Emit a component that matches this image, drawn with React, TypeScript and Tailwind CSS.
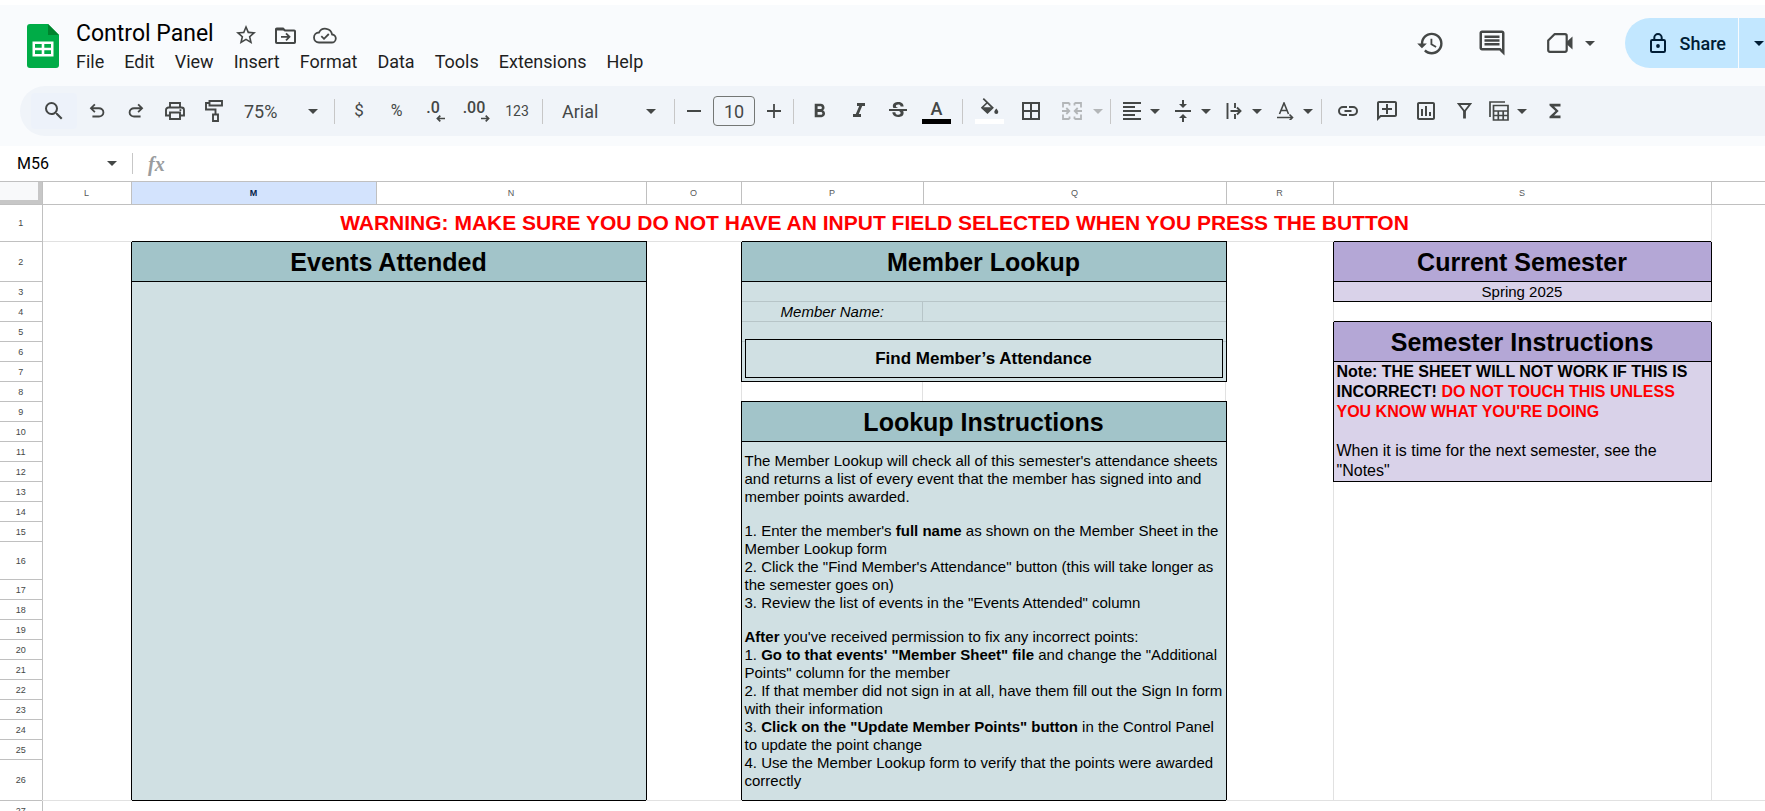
import React from "react";
import {
  MdBorderAll,
  MdFormatAlignLeft,
  MdFormatBold,
  MdFormatItalic,
  MdFunctions,
  MdHistory,
  MdOutlineAddComment,
  MdOutlineComment,
  MdOutlineInsertChart,
  MdSearch,
  MdStarBorder,
  MdStrikethroughS,
  MdVerticalAlignCenter,
} from "react-icons/md";

type SymbolProps = { d: string; className?: string };

/* Glyph on the 960-unit Material Symbols grid. */
function Symbol({ d, className = "size-5" }: SymbolProps) {
  return (
    <svg viewBox="0 -960 960 960" fill="currentColor" className={className} aria-hidden="true">
      <path d={d} />
    </svg>
  );
}

const UNDO =
  "M280-200v-80h284q63 0 109.500-40T720-420q0-60-46.500-100T564-560H312l104 104-56 56-200-200 200-200 56 56-104 104h252q97 0 166.500 63T800-420q0 94-69.500 157T564-200H280Z";
const REDO =
  "M396-200q-97 0-166.500-63T160-420q0-94 69.500-157T396-640h252L544-744l56-56 200 200-200 200-56-56 104-104H396q-63 0-109.500 40T240-420q0 60 46.500 100T396-280h284v80H396Z";

function Caret({ className = "" }: { className?: string }) {
  return (
    <svg viewBox="0 0 10 5" fill="currentColor" className={`w-[10px] h-[5px] shrink-0 ${className}`} aria-hidden="true">
      <path d="M0 0h10L5 5z" />
    </svg>
  );
}

function Divider() {
  return <span className="mx-[6px] h-[25px] w-px shrink-0 bg-[#c7c7c7]" />;
}

function Tool({ label, children, className = "w-[39px]" }: { label: string; children: React.ReactNode; className?: string }) {
  return (
    <button type="button" aria-label={label} className={`flex h-9 shrink-0 items-center justify-center ${className}`}>
      {children}
    </button>
  );
}

function DropTool({ label, children }: { label: string; children: React.ReactNode }) {
  return (
    <button type="button" aria-label={label} className="flex h-9 shrink-0 items-center">
      <span className="flex w-[30px] justify-center">{children}</span>
      <span className="flex w-[15px] justify-center">
        <Caret />
      </span>
    </button>
  );
}

function Logo() {
  return (
    <svg viewBox="0 0 32 44" className="h-[44px] w-8 shrink-0" aria-hidden="true">
      <path d="M3 0h18l11 11v30a3 3 0 0 1-3 3H3a3 3 0 0 1-3-3V3a3 3 0 0 1 3-3z" fill="#00ac47" />
      <path d="M21 0l11 11H21z" fill="#00832d" />
      <path d="M5.500 17.500h21v15h-21z" fill="#fff" />
      <path d="M8 20h6.700v3.700H8zM17.300 20H24v3.700h-6.700zM8 26.300h6.700V30H8zM17.300 26.300H24V30h-6.700z" fill="#00ac47" />
    </svg>
  );
}

function FolderMoveIcon() {
  return (
    <svg viewBox="0 0 21 17" className="h-[17px] w-[21px]" fill="none" stroke="currentColor" strokeWidth="2" aria-hidden="true">
      <path d="M1 3v12.200c0 .5.300.8.800.8h17.400c.5 0 .8-.3.800-.8V4.300c0-.5-.3-.8-.8-.8H10L8 1.500H1.800c-.5 0-.8.300-.8.800z" />
      <path d="M1 1.500h7l2 2H1z" fill="currentColor" stroke="none" />
      <path d="M6 9.800h8M11 6.300l3.500 3.500L11 13.300" strokeWidth="1.800" />
    </svg>
  );
}

function CloudDoneIcon() {
  return (
    <svg viewBox="0 0 24 17" className="h-[17px] w-6" fill="none" stroke="currentColor" strokeWidth="1.800" aria-hidden="true">
      <path d="M6 15.500h12.500a4 4 0 0 0 .6-8A7 7 0 0 0 6 5.500a5 5 0 0 0 0 10z" />
      <path d="M8.300 9.200l2.700 2.600 4.800-4.800" />
    </svg>
  );
}

function PrintIcon() {
  return (
    <svg viewBox="0 0 20 18" className="h-[18px] w-5" fill="none" stroke="currentColor" strokeWidth="1.900" aria-hidden="true">
      <path d="M5 5V1h10v4M5 13.500H1V8a2.500 2.500 0 0 1 2.500-2.500h13A2.500 2.500 0 0 1 19 8v5.500h-4" />
      <path d="M5 10.500h10V17H5z" />
      <path d="M14.500 7.300h1.800v1.800h-1.800z" fill="currentColor" stroke="none" />
    </svg>
  );
}

function PaintIcon() {
  return (
    <svg viewBox="0 0 18 22" className="h-[22px] w-[18px]" fill="none" stroke="currentColor" strokeWidth="1.900" aria-hidden="true">
      <path d="M4.500 1h12.500v4.500H4.500zM4.500 3H1v6.500h9.500V14" />
      <path d="M8 14.500h5V21H8z" />
    </svg>
  );
}

function DecimalIcon({ text, dir }: { text: string; dir: "left" | "right" }) {
  return (
    <span className="flex flex-col items-end text-[16px] leading-[14px] font-medium">
      <span className="pr-[5px]">{text}</span>
      <svg viewBox="0 0 9 7" className="h-[7px] w-[9px]" fill="none" stroke="currentColor" strokeWidth="1.700" aria-hidden="true">
        {dir === "left" ? <path d="M9 3.500H1.500M4.300.600L1.400 3.500l2.900 2.900" /> : <path d="M0 3.500h7.500M4.700.600l2.900 2.900-2.900 2.900" />}
      </svg>
    </span>
  );
}

function FillIcon() {
  return (
    <svg viewBox="0 0 18 17" className="h-[17px] w-[18px]" aria-hidden="true">
      <path d="M2.300.6l9.400 9.200-5.200 5L1 9.700l5.400-5.200" fill="none" stroke="currentColor" strokeWidth="1.700" />
      <path d="M1.200 9.200h10.300l-5 5z" fill="currentColor" />
      <path d="M15.300 10.500c1.200 1.500 2 2.500 2 3.600a2 2 0 0 1-4 0c0-1.100.8-2.100 2-3.600z" fill="currentColor" />
    </svg>
  );
}

function MergeIcon() {
  return (
    <svg viewBox="0 0 20 18" className="h-[18px] w-5" fill="none" stroke="currentColor" strokeWidth="1.800" aria-hidden="true">
      <path d="M7.500 1H1v4.500M1 12.500V17h6.500M12.500 1H19v4.500M19 12.500V17h-6.500" />
      <path d="M0 9h7M4.300 6l3 3-3 3M20 9h-7M15.700 6l-3 3 3 3M7.500 1v2.500M12.500 1v2.500M7.500 17v-2.500M12.500 17v-2.500" />
    </svg>
  );
}

function WrapIcon() {
  return (
    <svg viewBox="0 0 16 16" className="size-4" fill="none" stroke="currentColor" strokeWidth="1.900" aria-hidden="true">
      <path d="M1.500 0v16M4.500 8h9.500M11 4.500L14.500 8 11 11.500M9 0v5M9 11v5" />
    </svg>
  );
}

function RotateIcon() {
  return (
    <svg viewBox="0 0 18 18" className="size-[18px]" fill="none" stroke="currentColor" strokeWidth="1.600" aria-hidden="true">
      <path d="M3.500 12L8 1l4.500 11M5 8.500h6M1 15.500h15M13.500 12.500l3 3-3 3" />
    </svg>
  );
}

function LinkIcon() {
  return (
    <svg viewBox="0 0 20 10" className="h-[10px] w-5" fill="none" stroke="currentColor" strokeWidth="2" aria-hidden="true">
      <path d="M9 1H5a4 4 0 0 0 0 8h4M11 1h4a4 4 0 0 1 0 8h-4M6.500 5h7" />
    </svg>
  );
}

function FilterIcon() {
  return (
    <svg viewBox="0 0 15 16" className="h-4 w-[15px]" fill="none" stroke="currentColor" strokeWidth="1.800" aria-hidden="true">
      <path d="M1.700 1h11.600L7.500 8.500z" />
      <path d="M7.500 8v7.500" strokeWidth="2.800" />
    </svg>
  );
}

function TableViewsIcon() {
  return (
    <svg viewBox="0 0 20 20" className="size-5" fill="none" stroke="currentColor" strokeWidth="1.700" aria-hidden="true">
      <path d="M1 16V1h15" />
      <path d="M4.500 4.500H19V19H4.500zM4.500 10H19M4.500 14.500H19M9.300 10v9M14.200 10v9" />
    </svg>
  );
}

function VideoIcon() {
  return (
    <svg viewBox="0 0 26 20" className="h-5 w-[26px]" aria-hidden="true">
      <path
        d="M7.500 1.200H18c1 0 1.700.7 1.700 1.700v14.200c0 1-.7 1.700-1.700 1.700H2.900c-1 0-1.700-.7-1.700-1.700V7.500z"
        fill="none"
        stroke="currentColor"
        strokeWidth="2.200"
        strokeLinejoin="round"
      />
      <path d="M19.500 9L25.500 3.500v13L19.500 11z" fill="currentColor" />
    </svg>
  );
}

function LockIcon() {
  return (
    <svg viewBox="0 0 16 20" className="h-5 w-4" fill="none" stroke="currentColor" strokeWidth="2" aria-hidden="true">
      <rect x="1" y="7" width="14" height="12" rx="1.200" />
      <path d="M4.300 7V4.700a3.700 3.700 0 0 1 7.400 0V7" />
      <circle cx="8" cy="13" r="1.900" fill="currentColor" stroke="none" />
    </svg>
  );
}

const MENUS = ["File", "Edit", "View", "Insert", "Format", "Data", "Tools", "Extensions", "Help"];

function TitleBar() {
  return (
    <header className="flex items-start justify-between pl-[27px] pt-[13px]">
      <div className="flex">
        <div className="pt-[6px]">
          <Logo />
        </div>
        <div className="pl-[17px]">
          <div className="flex h-8 items-center">
            <h1 className="text-[23px] leading-[30px] text-black">Control Panel</h1>
            <div className="flex items-center gap-[17px] pl-[20px] pt-[2px] text-[#444746]">
              <button type="button" aria-label="Star">
                <MdStarBorder className="size-6" />
              </button>
              <button type="button" aria-label="Move">
                <FolderMoveIcon />
              </button>
              <button type="button" aria-label="Document status">
                <CloudDoneIcon />
              </button>
            </div>
          </div>
          <nav className="flex gap-5 text-[18px] leading-6 text-[#1f1f1f]">
            {MENUS.map((m) => (
              <button key={m} type="button">
                {m}
              </button>
            ))}
          </nav>
        </div>
      </div>
      <div className="-mr-[24px] flex h-[50px] shrink-0 items-center text-[#444746]">
        <button type="button" aria-label="Version history">
          <MdHistory className="size-[29px]" />
        </button>
        <button type="button" aria-label="Comments" className="ml-[32px]">
          <MdOutlineComment className="size-[30px]" />
        </button>
        <button type="button" aria-label="Start a call" className="ml-[40px] flex items-center gap-[12px]">
          <VideoIcon />
          <Caret />
        </button>
        <div className="ml-[30px] flex h-[50px] gap-px text-[#001d35]">
          <button
            type="button"
            className="flex items-center gap-[14px] rounded-l-full bg-[#c2e7ff] pr-[12px] pl-[25px] text-[18px] font-medium"
          >
            <LockIcon />
            Share
          </button>
          <button type="button" aria-label="Share options" className="flex w-[50px] items-center rounded-r-full bg-[#c2e7ff] pl-[15px]">
            <Caret />
          </button>
        </div>
      </div>
    </header>
  );
}

function Toolbar() {
  return (
    <div
      role="toolbar"
      className="mt-3 ml-5 flex h-[50px] items-center overflow-hidden rounded-l-full bg-[#f0f4f9] pl-[11px] text-[18px] text-[#444746]"
    >
      <Tool label="Search the menus" className="w-[46px] rounded-sm bg-[#edf2fa]">
        <MdSearch className="size-6" />
      </Tool>
      <Tool label="Undo">
        <Symbol d={UNDO} className="size-[22px]" />
      </Tool>
      <Tool label="Redo">
        <Symbol d={REDO} className="size-[22px]" />
      </Tool>
      <Tool label="Print">
        <PrintIcon />
      </Tool>
      <Tool label="Paint format">
        <PaintIcon />
      </Tool>
      <button type="button" className="flex h-9 w-[95px] shrink-0 items-center justify-between pr-[10px] pl-[11px]">
        75% <Caret />
      </button>
      <Divider />
      <Tool label="Currency" className="w-[36px]">
        <span className="text-[17px]">$</span>
      </Tool>
      <Tool label="Percent">
        <span className="text-[16px]">%</span>
      </Tool>
      <Tool label="Decrease decimals">
        <DecimalIcon text=".0" dir="left" />
      </Tool>
      <Tool label="Increase decimals" className="w-[43px]">
        <DecimalIcon text=".00" dir="right" />
      </Tool>
      <Tool label="More formats" className="w-[38px]">
        <span className="text-[14px]">123</span>
      </Tool>
      <Divider />
      <button type="button" className="flex h-9 w-[119px] shrink-0 items-center justify-between pr-[12px] pl-[13px]">
        Arial <Caret />
      </button>
      <Divider />
      <Tool label="Decrease font size" className="w-[26px]">
        <svg viewBox="0 0 14 14" className="size-[14px]" stroke="currentColor" strokeWidth="1.800" aria-hidden="true">
          <path d="M0 7h14" />
        </svg>
      </Tool>
      <input
        aria-label="Font size"
        defaultValue="10"
        className="mx-[6px] h-[30px] w-[42px] shrink-0 rounded-[4px] border border-[#747775] bg-transparent text-center text-[18px]"
      />
      <Tool label="Increase font size" className="w-[26px]">
        <svg viewBox="0 0 14 14" className="size-[14px]" stroke="currentColor" strokeWidth="1.800" aria-hidden="true">
          <path d="M0 7h14M7 0v14" />
        </svg>
      </Tool>
      <Divider />
      <Tool label="Bold">
        <MdFormatBold className="size-[23px]" />
      </Tool>
      <Tool label="Italic">
        <MdFormatItalic className="size-6" />
      </Tool>
      <Tool label="Strikethrough">
        <MdStrikethroughS className="size-6" />
      </Tool>
      <Tool label="Text color">
        <span className="flex flex-col items-center text-[18px] leading-[19px] font-medium">
          A
          <span className="mt-[1px] h-[5px] w-[29px] bg-black" />
        </span>
      </Tool>
      <Divider />
      <Tool label="Fill color" className="w-[41px]">
        <span className="flex flex-col items-center">
          <FillIcon />
          <span className="mt-[4px] h-[5px] w-[29px] bg-white" />
        </span>
      </Tool>
      <Tool label="Borders" className="w-[41px]">
        <MdBorderAll className="size-6" />
      </Tool>
      <Tool label="Merge cells" className="w-[41px] text-[#b3b6b8]">
        <MergeIcon />
      </Tool>
      <Tool label="Merge options" className="w-3 text-[#b3b6b8]">
        <Caret />
      </Tool>
      <Divider />
      <div className="flex gap-[6px]">
        <DropTool label="Horizontal align">
          <MdFormatAlignLeft className="size-6" />
        </DropTool>
        <DropTool label="Vertical align">
          <MdVerticalAlignCenter className="size-6" />
        </DropTool>
        <DropTool label="Text wrapping">
          <WrapIcon />
        </DropTool>
        <DropTool label="Text rotation">
          <RotateIcon />
        </DropTool>
      </div>
      <Divider />
      <Tool label="Insert link">
        <LinkIcon />
      </Tool>
      <Tool label="Insert comment">
        <MdOutlineAddComment className="size-6 -scale-x-100" />
      </Tool>
      <Tool label="Insert chart">
        <MdOutlineInsertChart className="size-6" />
      </Tool>
      <Tool label="Create a filter">
        <FilterIcon />
      </Tool>
      <div className="flex gap-[6px]">
        <DropTool label="Filter views">
          <TableViewsIcon />
        </DropTool>
        <Tool label="Functions">
          <MdFunctions className="size-[22px]" />
        </Tool>
      </div>
    </div>
  );
}

function FormulaBar() {
  return (
    <div className="flex h-[35px] items-center bg-white">
      <input aria-label="Name box" defaultValue="M56" className="w-[90px] bg-transparent pl-[17px] text-[16px] text-black" />
      <Caret className="ml-[17px] text-[#444746]" />
      <span className="ml-[15px] h-[21px] w-px bg-[#c7c7c7]" />
      <label htmlFor="formula" className="pl-[15px] font-['Liberation_Serif',serif] text-[20px] leading-none font-bold text-[#9a9c9e] italic">
        fx
      </label>
      <input id="formula" className="min-w-0 flex-1 bg-transparent pl-4 text-[16px]" />
    </div>
  );
}

const COLUMNS = ["L", "M", "N", "O", "P", "Q", "R", "S", ""];

const BOX = "border border-black";
const TEAL_HEAD = "border border-black bg-[#a2c4c9] text-[25px] leading-7 font-bold";
const PURPLE_HEAD = "border border-black bg-[#b4a7d6] text-[25px] leading-7 font-bold";

function rowHeight(n: number): string {
  switch (n) {
    case 1:
      return "h-[37px]";
    case 2:
      return "h-[40px]";
    case 16:
      return "h-[38px]";
    case 26:
      return "h-[41px]";
    default:
      return "h-[20px]";
  }
}

function LookupText() {
  return (
    <div className="text-left text-[15px] leading-[18px]">
      <p>
        The Member Lookup will check all of this semester's attendance sheets and returns a list of every event that the
        member has signed into and member points awarded.
      </p>
      <p className="mt-4">
        1. Enter the member's <b>full name</b> as shown on the Member Sheet in the Member Lookup form
      </p>
      <p>2. Click the "Find Member's Attendance" button (this will take longer as the semester goes on)</p>
      <p>3. Review the list of events in the "Events Attended" column</p>
      <p className="mt-4">
        <b>After</b> you've received permission to fix any incorrect points:
      </p>
      <p>
        1. <b>Go to that events' "Member Sheet" file</b> and change the "Additional Points" column for the member
      </p>
      <p>2. If that member did not sign in at all, have them fill out the Sign In form with their information</p>
      <p>
        3. <b>Click on the "Update Member Points" button</b> in the Control Panel to update the point change
      </p>
      <p>4. Use the Member Lookup form to verify that the points were awarded correctly</p>
    </div>
  );
}

/* Cells that begin in the given row; merged areas span down from here.
   Grid lines inside a black box are inset shadows, so they never cut its border. */
function rowCells(n: number): React.ReactNode {
  switch (n) {
    case 1:
      return (
        <>
          <td colSpan={8} className="border-r border-[#e1e1e1] pr-1 text-[21px] leading-6 font-bold text-[#ff0000]">
            WARNING: MAKE SURE YOU DO NOT HAVE AN INPUT FIELD SELECTED WHEN YOU PRESS THE BUTTON
          </td>
          <td rowSpan={26} className="border-b border-[#e1e1e1]" />
        </>
      );
    case 2:
      return (
        <>
          <td rowSpan={25} className="border-y border-[#e1e1e1]" />
          <td colSpan={2} className={TEAL_HEAD}>
            Events Attended
          </td>
          <td rowSpan={25} className="border-y border-[#e1e1e1]" />
          <td colSpan={2} className={TEAL_HEAD}>
            Member Lookup
          </td>
          <td rowSpan={25} className="border-y border-[#e1e1e1]" />
          <td className={PURPLE_HEAD}>Current Semester</td>
        </>
      );
    case 3:
      return (
        <>
          <td colSpan={2} rowSpan={24} className={`${BOX} bg-[#d0e0e3]`} />
          <td colSpan={2} className="border-x border-black bg-[#d0e0e3] shadow-[inset_0_-1px_0_#b7c5c8]" />
          <td className={`${BOX} bg-[#d9d2e9] text-[15px] leading-[18px]`}>Spring 2025</td>
        </>
      );
    case 4:
      return (
        <>
          <td className="border-l border-black bg-[#d0e0e3] text-[15px] leading-[18px] italic shadow-[inset_-1px_-1px_0_#b7c5c8]">
            <label htmlFor="member">Member Name:</label>
          </td>
          <td className="border-r border-black bg-[#d0e0e3] p-0 shadow-[inset_0_-1px_0_#b7c5c8]">
            <input id="member" className="block h-[18px] w-full bg-transparent px-1 text-[15px]" />
          </td>
          <td className="border-x border-[#e1e1e1]" />
        </>
      );
    case 5:
      return (
        <>
          <td colSpan={2} className="border-x border-black bg-[#d0e0e3] shadow-[inset_0_-1px_0_#b7c5c8]" />
          <td rowSpan={2} className={PURPLE_HEAD}>
            Semester Instructions
          </td>
        </>
      );
    case 6:
      return (
        <td colSpan={2} rowSpan={2} className="relative border-x border-b border-black bg-[#d0e0e3]">
          <button
            type="button"
            className="absolute inset-x-[3px] -top-[3px] bottom-[3px] border border-black bg-[#d0e0e3] text-[17px] font-bold"
          >
            Find Member’s Attendance
          </button>
        </td>
      );
    case 7:
      return (
        <td rowSpan={6} className={`${BOX} bg-[#d9d2e9] px-[3px] text-left text-[16px] leading-5`}>
          <p className="font-bold">
            Note: THE SHEET WILL NOT WORK IF THIS IS INCORRECT!{" "}
            <span className="text-[#ff0000]">DO NOT TOUCH THIS UNLESS YOU KNOW WHAT YOU'RE DOING</span>
          </p>
          <p className="mt-[19px]">When it is time for the next semester, see the "Notes"</p>
        </td>
      );
    case 8:
      return (
        <>
          <td className="shadow-[inset_1px_0_0_#e1e1e1,inset_-1px_0_0_#e1e1e1]" />
          <td className="shadow-[inset_-1px_0_0_#e1e1e1]" />
        </>
      );
    case 9:
      return (
        <td colSpan={2} rowSpan={2} className={TEAL_HEAD}>
          Lookup Instructions
        </td>
      );
    case 11:
      return (
        <td colSpan={2} rowSpan={16} className={`${BOX} bg-[#d0e0e3] px-[3px]`}>
          <LookupText />
        </td>
      );
    case 13:
      return <td rowSpan={14} className="border-x border-b border-[#e1e1e1]" />;
    case 27:
      return <td colSpan={9} />;
    default:
      return null;
  }
}

function Sheet() {
  const rows = Array.from({ length: 27 }, (_, i) => i + 1);
  return (
    <table className="w-full table-fixed border-collapse bg-white text-center font-['Liberation_Sans',Arial,sans-serif] text-black [&_td]:py-0">
      <colgroup>
        <col className="w-[42px]" />
        <col className="w-[89px]" />
        <col className="w-[245px]" />
        <col className="w-[270px]" />
        <col className="w-[95px]" />
        <col className="w-[182px]" />
        <col className="w-[303px]" />
        <col className="w-[107px]" />
        <col className="w-[378px]" />
        <col />
      </colgroup>
      <thead>
        <tr className="h-[23px]">
          <th aria-label="Select all" className="relative border-t border-b border-[#c0c0c0] bg-[#f8f9fa] p-0">
            <span className="absolute inset-0 border-r-4 border-b-4 border-[#c7c7c7]" />
          </th>
          {COLUMNS.map((c) => (
            <th
              key={c}
              scope="col"
              className={`border-y border-l border-[#c0c0c0] p-0 text-[9px] leading-3 ${
                c === "M" ? "bg-[#d3e3fd] font-bold text-[#041e49]" : "font-normal text-[#575a5a]"
              }`}
            >
              {c}
            </th>
          ))}
        </tr>
      </thead>
      <tbody>
        {rows.map((n) => (
          <tr key={n} className={rowHeight(n)}>
            <th scope="row" className="border-r border-b border-[#c0c0c0] p-0 text-[9px] leading-3 font-normal text-[#444746]">
              {n}
            </th>
            {rowCells(n)}
          </tr>
        ))}
      </tbody>
    </table>
  );
}

export default function App() {
  return (
    <div className="h-screen overflow-hidden bg-white pt-[5px] font-[Roboto,sans-serif]">
      <div className="overflow-hidden bg-[#f9fbfd] pb-[10px]">
        <TitleBar />
        <Toolbar />
      </div>
      <FormulaBar />
      <Sheet />
    </div>
  );
}
